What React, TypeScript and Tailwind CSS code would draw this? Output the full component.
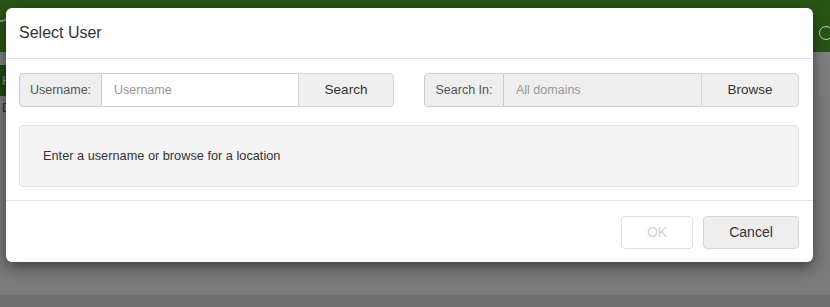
import React from "react";

export default function App() {
  return (
    <div className="relative w-[830px] h-[307px] overflow-hidden bg-[#7b7b7b] font-['Liberation_Sans',Arial,sans-serif]">
      {/* background page (dimmed) */}
      <div className="absolute inset-0 flex flex-col">
        <div className="h-[52px] bg-[#285616] relative">
          <div className="absolute left-[-10px] top-[8px] w-[18px] h-[14px] rounded-full border-b-2 border-[#8a9a84]" />
          <div className="absolute left-[819px] top-[26px] w-[14px] h-[14px] rounded-full border-[1.5px] border-[#c9d3c4]" />
        </div>
        <div className="h-[13px] bg-[#818181]" />
        <div className="h-[31px] bg-[#7f7f7f] flex">
          <div className="w-[6px] bg-[#1f4a12] text-[#6f9fc6] text-[13px] leading-[31px] pl-[2px] overflow-hidden">H</div>
        </div>
        <div className="h-[24px] bg-[#7c7c7c] flex">
          <div className="w-[6px] text-[#2e2e2e] text-[13px] leading-[24px] pl-[2px] overflow-hidden">D</div>
        </div>
        <div className="flex-1 bg-[#7b7b7b]" />
        <div className="h-[12px] bg-[#707070]" />
      </div>

      {/* modal */}
      <div className="absolute left-[6px] top-[8px] w-[807px] h-[254px] bg-white rounded-[6px] shadow-[0_5px_15px_rgba(0,0,0,0.5)] flex flex-col">
        <div className="h-[51px] shrink-0 border-b border-[#e5e5e5] px-[13px] flex items-center">
          <h4 className="text-[16px] text-[#333] leading-none">Select User</h4>
        </div>

        <div className="pt-[14px] pb-[13px] pl-[13px] pr-[14px] flex flex-col">
          <div className="flex justify-between">
            {/* Username group */}
            <div className="flex h-[34px] w-[375px] text-[12.5px]">
              <div className="w-[83px] shrink-0 flex items-center justify-center bg-[#eeeeee] border border-[#cccccc] rounded-l-[4px] text-[#555]">
                Username:
              </div>
              <div className="w-[196px] shrink-0 flex items-center pl-[12px] border-y border-[#cccccc] bg-white text-[#999]">
                Username
              </div>
              <div className="flex-1 flex items-center justify-center bg-[#efefef] border border-[#d6d6d6] rounded-r-[4px] text-[13.5px] text-[#333]">
                Search
              </div>
            </div>

            {/* Search In group */}
            <div className="flex h-[34px] w-[375px] text-[12.5px]">
              <div className="w-[80px] shrink-0 flex items-center justify-center bg-[#eeeeee] border border-[#cccccc] rounded-l-[4px] text-[#555]">
                Search In:
              </div>
              <div className="w-[197px] shrink-0 flex items-center pl-[12px] border-y border-[#cccccc] bg-[#eeeeee] text-[#999]">
                All domains
              </div>
              <div className="flex-1 flex items-center justify-center bg-[#efefef] border border-[#d6d6d6] rounded-r-[4px] text-[13.5px] text-[#333]">
                Browse
              </div>
            </div>
          </div>

          <div className="mt-[18px] h-[62px] bg-[#f4f4f4] border border-[#e3e3e3] rounded-[4px] flex items-center pl-[23px] text-[12.75px] text-[#333]">
            Enter a username or browse for a location
          </div>
        </div>

        <div className="border-t border-[#e5e5e5] pt-[15px] pr-[14px] flex justify-end gap-[10px]">
          <div className="w-[72px] h-[33px] flex items-center justify-center bg-white border border-[#dedede] rounded-[4px] text-[14px] text-[#d3d3d3]">
            OK
          </div>
          <div className="w-[96px] h-[33px] flex items-center justify-center bg-[#eeeeee] border border-[#d6d6d6] rounded-[4px] text-[14px] text-[#333]">
            Cancel
          </div>
        </div>
      </div>
    </div>
  );
}
